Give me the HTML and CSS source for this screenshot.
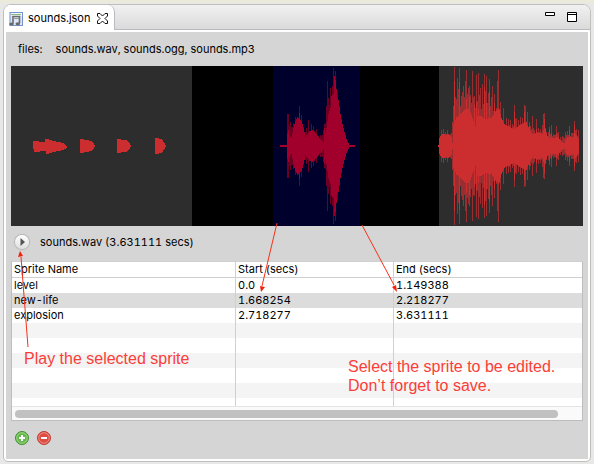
FILE: index.html
```html
<!DOCTYPE html>
<html lang="en">
<head>
<meta charset="utf-8">
<title>sounds.json</title>
<link rel="stylesheet" href="styles.css">
</head>
<body>
<main class="panel">
  <header class="tabs">
    <div class="tab">
      <svg class="tab-icon" width="14" height="14" viewBox="0 0 14 14" aria-hidden="true">
        <rect x="1" y=".5" width="12.500" height="13" fill="#dce6f6" stroke="#7194cf"/>
        <path d="M2 1h11v3H2z" fill="#f6faf4"/>
        <path d="M2 2.500h10" stroke="#8bb78a"/>
        <path d="M4 11.500V4.500h6.500v6.500" fill="none" stroke="#6a6a6a" stroke-width="1.600"/>
        <path d="M4 6.500h6.500" stroke="#999"/>
        <ellipse cx="2.500" cy="12" rx="2.300" ry="1.600" fill="#6a6a6a"/>
        <ellipse cx="8.800" cy="11.800" rx="2.300" ry="1.600" fill="#6a6a6a"/>
      </svg>
      <span>sounds.json</span>
      <button class="icon-button close" aria-label="Close">
        <svg width="11" height="11" viewBox="0 0 11 11"><path d="M.5.5h2.500l2.500 2.500L8 .5h2.500V3L8 5.500 10.500 8v2.500H8L5.500 8 3 10.500H.5V8L3 5.500.5 3z" fill="#fff" stroke="#111"/></svg>
      </button>
    </div>
    <div class="window-actions">
      <button class="icon-button" aria-label="Minimize">
        <svg width="10" height="10" viewBox="0 0 10 10"><path d="M.5.5h9v3h-9z" fill="#fff" stroke="#000"/></svg>
      </button>
      <button class="icon-button" aria-label="Maximize">
        <svg width="10" height="10" viewBox="0 0 10 10"><path d="M.5.5h9v9h-9zM.5 2.500h9" fill="#fff" stroke="#000"/></svg>
      </button>
    </div>
  </header>

  <section class="editor">
    <div class="files"><span>files:</span><span>sounds.wav, sounds.ogg, sounds.mp3</span></div>

    <svg class="wave" viewBox="0 0 572 160" preserveAspectRatio="none" role="img" aria-label="Waveform">
      <rect width="572" height="160" fill="#000"/>
      <rect width="181" height="160" fill="#2d2d2d"/>
      <rect x="262" width="87" height="160" fill="#00002d"/>
      <rect x="428" width="144" height="160" fill="#2d2d2d"/>
      <g transform="translate(0 80)">
        <g fill="#cc2d2f">
          <path d="M22 0V-5h4l3 1h5v-3h3l1 1h2l2 1 6 1 4 1 2 2 2 2-2 2-2 1-4 1-6 1-3 1-2 1h-2v-3h-5l-3 1h-4z"/>
          <path d="M69 0v-7h3l1 1h3l4 1 2 1 1 2 1 2-1 2-1 2-2 1-4 1h-3l-1 1h-3z"/>
          <path d="M106 0v-7h3l1 1h4l3 1 2 3 1 2-1 2-2 3-3 1h-4l-1 1h-3z"/>
          <path d="M144 0v-8h3l1 1h2l2 2 2 3 1 2-1 2-2 3-2 2h-2l-1 1h-3z"/>
        </g>
        <path id="life-peaks" stroke="#6c0024"/>
        <path id="life-core" stroke="#a2002c"/>
        <path id="boom-peaks" stroke="#9a2d2f"/>
        <path id="boom-core" stroke="#cc2d2f"/>
      </g>
    </svg>

    <div class="player">
      <button class="icon-button play" aria-label="Play"><svg width="14" height="14" viewBox="0 0 14 14"><path d="M5.500 3v8L10 7z" fill="#555"/></svg></button>
      <span>sounds.wav (3.631111 secs)</span>
    </div>

    <div class="grid">
      <div class="grid-view">
        <table>
          <colgroup><col class="name"><col class="start"><col></colgroup>
          <thead><tr><th>Sprite Name</th><th>Start (secs)</th><th>End (secs)</th></tr></thead>
          <tbody>
            <tr><td>level</td><td>0.0</td><td>1.149388</td></tr>
            <tr class="selected"><td>new-life</td><td>1.668254</td><td>2.218277</td></tr>
            <tr><td>explosion</td><td>2.718277</td><td>3.631111</td></tr>
            <tr><td></td><td></td><td></td></tr>
            <tr><td></td><td></td><td></td></tr>
            <tr><td></td><td></td><td></td></tr>
            <tr><td></td><td></td><td></td></tr>
            <tr><td></td><td></td><td></td></tr>
            <tr><td></td><td></td><td></td></tr>
          </tbody>
        </table>
      </div>
      <div class="scrollbar"><div class="thumb"></div></div>
    </div>

    <footer class="actions">
      <button class="icon-button" aria-label="Add sprite">
        <svg width="14" height="14" viewBox="0 0 14 14"><circle cx="7" cy="7" r="6.500" fill="#67b94d" stroke="#3f8f32"/><circle cx="7" cy="7" r="5.300" fill="none" stroke="#a9dd94" stroke-width=".8"/><path d="M7 4v6M4 7h6" stroke="#fff" stroke-width="2"/></svg>
      </button>
      <button class="icon-button" aria-label="Remove sprite">
        <svg width="14" height="14" viewBox="0 0 14 14"><circle cx="7" cy="7" r="6.500" fill="#df4c42" stroke="#bd3a34"/><circle cx="7" cy="7" r="5.300" fill="none" stroke="#f3a093" stroke-width=".8"/><path d="M4 7h6" stroke="#fff" stroke-width="2"/></svg>
      </button>
    </footer>
  </section>
</main>

<svg class="arrows" width="594" height="464" viewBox="0 0 594 464" aria-hidden="true">
  <g stroke="#f5321a" stroke-width="1" fill="none"><path d="M277 223 262 286M362 225l32 60M28 347l-7-90"/></g>
  <g fill="#f5200c"><path d="M261 292l-1-6 5 1zM397 292l-5-5 4-2zM20 251l3 5-5 1z"/></g>
</svg>
<p class="note note-play">Play the selected sprite</p>
<p class="note note-select">Select the sprite to be edited.<br>Don’t forget to save.</p>
<script src="wave.js"></script>
</body>
</html>
```
FILE: styles.css
```css
* { box-sizing: border-box; }

body {
  margin: 0;
  min-height: 100vh;
  padding: 4px 3px 2px;
  display: flex;
  position: relative;
  background: linear-gradient(#ebeadb 0 3px, #e8e8e8 3px);
  color: #000;
  font: 11px/15px Inter, "Liberation Sans", sans-serif;
  font-variant-numeric: tabular-nums;
}

.panel {
  flex: 1;
  display: flex;
  flex-direction: column;
  border: 1px solid #bfc0bb;
  border-radius: 8px 8px 5px 5px;
  background: #fff;
  overflow: hidden;
}

.tabs {
  display: flex;
  justify-content: space-between;
  height: 25px;
  background: linear-gradient(#f1f1f1, #d9d9d9);
  box-shadow: inset 0 -1px #b9b9c2;
}

.tab {
  display: flex;
  align-items: center;
  padding: 2px 6px 0 5px;
  gap: 5px;
  background: #fff;
  border-right: 1px solid #b9b9c2;
  border-radius: 0 7px 0 0;
}

.icon-button {
  display: block;
  padding: 0;
  border: 0;
  background: none;
}

.icon-button svg { display: block; }
.close { margin-left: 2px; }

.window-actions {
  display: flex;
  gap: 12px;
  padding: 7px 13px 0 0;
  align-items: flex-start;
}

.editor {
  flex: 1;
  display: flex;
  flex-direction: column;
  margin: 2px;
  padding: 0 5px;
  background: #d5d5d5;
}

.files {
  display: flex;
  align-items: center;
  gap: 13px;
  height: 34px;
  padding-left: 7px;
}

.wave {
  display: block;
  width: 100%;
  height: 160px;
  shape-rendering: crispEdges;
}

.player {
  display: flex;
  align-items: center;
  gap: 11px;
  height: 32px;
  margin-bottom: 3px;
  padding-left: 4px;
}

.play {
  border-radius: 50%;
  background: linear-gradient(#fff, #dedede);
  box-shadow: 0 0 1px 1px #b5b5b5;
}

.grid {
  flex: 1;
  display: flex;
  flex-direction: column;
  border: 1px solid #bdbdbd;
  border-top-color: #d0d0d0;
  background: #fff;
}

.grid-view {
  flex: 1 0 0;
  overflow: hidden;
}

table {
  width: 100%;
  table-layout: fixed;
  border-collapse: separate;
  border-spacing: 0;
}

.name { width: 223px; }
.start { width: 158px; }

th, td {
  height: 15px;
  padding: 0 2px;
  line-height: 15px;
  font-weight: 400;
  text-align: left;
}

th {
  height: 16px;
  border-bottom: 1px solid #cfcfcf;
}

th + th, td + td { border-left: 1px solid #d0d0d0; }
tbody tr:nth-child(even) { background: #f4f4f4; }
tbody tr.selected { background: #dcdcdc; }

.scrollbar {
  height: 14px;
  padding: 3px 24px 3px 3px;
  border-top: 1px solid #e4e4e4;
  background: #fafafa;
}

.thumb {
  height: 8px;
  border-radius: 4px;
  background: #c1c1c1;
}

.actions {
  display: flex;
  gap: 8px;
  height: 38px;
  padding: 10px 4px;
}

.actions .icon-button { height: 14px; }

.arrows {
  position: absolute;
  top: 0;
  left: 0;
  pointer-events: none;
}

.note {
  position: absolute;
  margin: 0;
  color: #fb3e38;
  font: 16px/19px "Liberation Sans", Arial, sans-serif;
}

.note-play { left: 24px; top: 349px; }
.note-select { left: 348px; top: 357px; }
```
FILE: wave.js
```js
// Envelope points are [x, half height]; core is solid, peaks are the brief spikes.
const life = {
  core: [[269,1],[275,1],[276,13],[280,8],[282,18],[284,25],[286,29],[288,26],[290,25],[292,18],[294,9],[296,11],[298,15],[301,16],[304,13],[306,10],[308,8],[311,5],[312,3],[313,7],[315,18],[317,32],[319,38],[320,50],[322,52],[323,70],[324,66],[326,48],[327,46],[329,32],[331,22],[333,14],[335,7],[337,3],[338,1],[344,1]],
  peaks: [[276,32],[277,32],[284,29],[288,40],[290,31],[292,19],[295,18],[297,26],[300,22],[302,20],[305,17],[307,10],[313,22],[316,65],[317,48],[319,58],[321,60],[322,78],[324,75],[326,54],[328,40],[330,27],[332,18]]
};
const boom = {
  core: [[427,1],[428,8],[430,11],[432,12],[434,11],[437,12],[440,9],[441,3],[442,22],[445,28],[450,33],[454,37],[458,37],[461,28],[464,20],[466,30],[470,30],[473,27],[480,28],[485,36],[488,36],[490,28],[493,22],[498,19],[502,17],[507,20],[512,23],[515,24],[518,16],[521,12],[528,13],[531,12],[533,20],[536,10],[539,8],[544,8],[547,9],[550,4],[553,3],[555,8],[558,10],[561,8],[564,12],[566,9],[568,5]],
  peaks: [[430,16],[432,17],[434,14],[436,16],[439,12],[442,40],[443,79],[445,47],[446,68],[448,78],[450,50],[451,54],[452,60],[454,65],[455,76],[457,58],[458,60],[461,75],[463,50],[465,71],[467,73],[469,58],[471,62],[473,72],[475,70],[478,67],[481,60],[483,52],[486,65],[487,76],[489,44],[492,38],[495,28],[497,27],[499,26],[501,22],[503,41],[505,28],[507,26],[509,29],[511,28],[513,41],[514,40],[516,34],[518,24],[521,30],[523,16],[525,27],[527,18],[529,17],[532,32],[533,33],[535,14],[538,19],[540,21],[542,12],[545,20],[547,14],[549,9],[551,10],[554,14],[556,15],[558,20],[560,13],[563,25],[565,17],[567,16]]
};

function bar(x, h) {
  return `M${x + 0.5} ${-h}V${h}`;
}

function heights(points) {
  const map = new Map();
  for (let i = 0; i < points.length - 1; i++) {
    const [x0, h0] = points[i];
    const [x1, h1] = points[i + 1];
    for (let x = x0; x < x1; x++) {
      map.set(x, h0 + (h1 - h0) * (x - x0) / (x1 - x0));
    }
  }
  return map;
}

function draw(name, data) {
  const core = heights(data.core);
  const slopes = heights(data.peaks);
  const spikes = new Map(data.peaks);
  const strong = [0.62, 0.3, 0.5, 0.82, 0.4];
  let solid = "";
  let faint = "";
  for (const [x, h] of core) {
    const spike = spikes.get(x);
    const lift = spike ? spike * strong[x % 5] : 0;
    solid += bar(x, Math.round(Math.max(h, lift)));
    const edge = spike || (slopes.get(x) || 0) * (x % 3 ? 0.62 : 0.78);
    if (edge > h) faint += bar(x, Math.round(edge));
  }
  document.getElementById(`${name}-core`).setAttribute("d", solid);
  document.getElementById(`${name}-peaks`).setAttribute("d", faint);
}

draw("life", life);
draw("boom", boom);
```
